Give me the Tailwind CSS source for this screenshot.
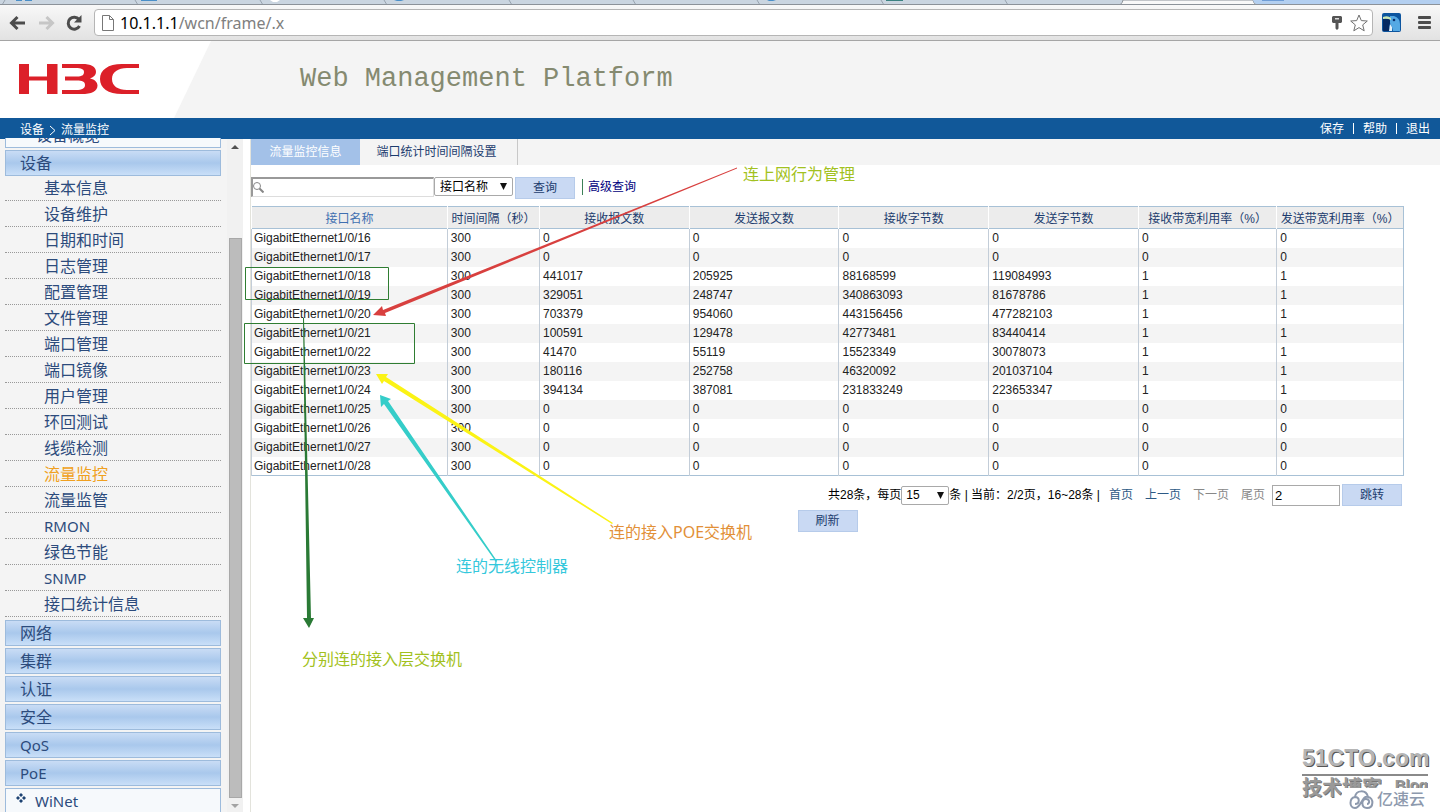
<!DOCTYPE html>
<html lang="zh-CN">
<head>
<meta charset="utf-8">
<title>Web Management Platform</title>
<script src="https://cdn.jsdelivr.net/npm/@tailwindcss/browser@4"></script>
</head>
<body class="relative flex h-screen flex-col overflow-hidden bg-white font-['Liberation_Sans','Noto_Sans_CJK_SC',sans-serif] text-xs text-[#1c3c6e]">

<!-- Browser chrome -->
<div class="relative h-[5px] shrink-0 overflow-hidden border-b border-[#8c9299] bg-[#cad5e0]">
  <svg class="absolute inset-0 h-[5px] w-full" aria-hidden="true">
    <g stroke="#98a3af" stroke-width="1"><path d="M5 0l-3 5M135 0l3 5M260 0l3 5M384 0l3 5M509 0l3 5M633 0l3 5M757 0l3 5M881 0l3 5M1005 0l3 5"/></g>
    <g fill="#4a8fc8"><rect x="16" y="0" width="6" height="1"/><rect x="25" y="0" width="7" height="1"/><rect x="141" y="0" width="16" height="1"/><path d="M394 0h10l-3 1h-4zM767 0h9l-3 1h-4z"/></g>
    <rect x="886" width="17" height="1" fill="#3c8281"/>
    <path d="M270 0h10l-3 2h-4z" fill="#fff"/>
    <path d="M1123 0q-1 5-5 5h140q-4 0-5-5z" fill="#f8f8f8" stroke="#8c9299"/>
    <path d="M1253 0q1 4 5 4h182V0z" fill="#b3cff0"/>
    <path d="M1262 0h22v1h-22z" fill="#6f9dd6"/>
  </svg>
</div>
<div class="flex h-9 shrink-0 items-center border-b border-[#a5a5a5] bg-linear-to-b from-[#f8f8f8] to-[#e2e2e2] pl-2 pr-2">
  <button class="h-5 w-7" aria-label="后退"><svg width="20" height="18" viewBox="0 0 20 18" fill="none" stroke="#4c4c4c" stroke-width="3"><path d="M17 9H4M9.500 3L3.500 9l6 6"/></svg></button>
  <button class="h-5 w-7" aria-label="前进"><svg width="20" height="18" viewBox="0 0 20 18" fill="none" stroke="#c6c6c6" stroke-width="3"><path d="M3 9h13M10.500 3l6 6-6 6"/></svg></button>
  <button class="h-5 w-[30px]" aria-label="刷新页面"><svg width="20" height="18" viewBox="0 0 20 18"><path d="M15 5.500A6 6 0 1 0 15.500 12" fill="none" stroke="#4c4c4c" stroke-width="3"/><path d="M17.500 1v7.500H10z" fill="#4c4c4c"/></svg></button>
  <div class="flex h-[27px] min-w-0 flex-1 items-center rounded-sm border border-[#b5b5b5] bg-white pl-[7px] pr-1">
    <svg width="12" height="16" viewBox="0 0 12 16" fill="#fff" stroke="#777"><path d="M.5.5h7l4 4v11H.500zM7.500.500v4h4"/></svg>
    <span class="ml-[6px] flex-1 font-['Noto_Sans',sans-serif] text-base text-[#808080]"><span class="text-black">10.1.1.1</span>/wcn/frame/.x</span>
    <svg width="10" height="14" viewBox="0 0 10 14"><path d="M1 0h8l1 1v5L9 7H6.500v5.500L5 14l-1.500-1.500V7H1L0 6V1z" fill="#555"/><path d="M3 2h4v1.500H3z" fill="#ddd"/></svg>
    <svg class="ml-2" width="18" height="18" viewBox="0 0 18 18" fill="#fff" stroke="#707070"><path d="M9 1l2.300 5.600 6 .4-4.600 3.900 1.500 5.900L9 13.600l-5.200 3.200 1.500-5.900L.700 7l6-.4z"/></svg>
  </div>
  <svg class="ml-[9px]" width="19" height="19" viewBox="0 0 19 19"><rect width="19" height="19" rx="2" fill="#0d559f"/><path d="M8 3h4q6 2 6 8v7h-7l-1-4q-3-4-2-8z" fill="#55a9e4"/><path d="M1 6h7v4l-1 4 2 4H1z" fill="#062a62"/><path d="M1 4q5-2 8 1v2q-4-2-8-1z" fill="#cde9b4"/><path d="M8 11l2 3v4H7z" fill="#e2f1fa"/><circle cx="12" cy="7" r="1.300" fill="#092e6c"/></svg>
  <button class="ml-4" aria-label="菜单"><svg width="15" height="14" viewBox="0 0 15 14" fill="#4c4c4c"><rect y="0" x="1" width="13" height="3" rx="1"/><rect y="5" x="1" width="13" height="3" rx="1"/><rect y="10" x="1" width="13" height="3" rx="1"/></svg></button>
</div>

<!-- Banner -->
<header class="relative flex h-[77px] shrink-0 items-center bg-[#f4f4f4]">
  <svg class="h-[77px] w-[300px] shrink-0" viewBox="0 0 300 77" role="img" aria-label="H3C">
    <path d="M0 0h211l-37 77H0z" fill="#fff"/>
    <g fill="#dc2029">
      <path d="M19 23h10v12.500h18V23h10.500v30H47V39.500H29V53H19z"/>
      <path d="M62 23h20c9 0 14 2.500 14 8 0 3-2 5-6 6.500 5 1 7.500 4 7.500 7 0 6-6 8.500-16 8.500H62v-4h14c6 0 9-1.500 9-5s-3-4.500-8-4.500H65v-4h12c5 0 7-1.500 7-4.500S81 27 76 27H62z"/>
      <path d="M139 23v4h-12c-9 0-15 4-15 11s6 11 15 11h12v4h-17c-14 0-22-6-22-15s8-15 22-15z"/>
    </g>
  </svg>
  <h1 class="font-['Liberation_Mono',monospace] text-[27px] text-[#858a70]">Web Management Platform</h1>
</header>

<nav class="flex h-[21px] shrink-0 items-center justify-between bg-[#115899] pl-5 pr-[10px] text-white" aria-label="位置">
  <div class="flex gap-[5px] pt-[2px]"><span>设备</span><svg class="mt-[3px]" width="7" height="11" viewBox="0 0 7 11" fill="none" stroke="#fff"><path d="M1 1l5 4.500L1 10"/></svg><span>流量监控</span></div>
  <div class="flex items-center gap-[9px]"><a href="#">保存</a><span class="h-[11px] w-px bg-white"></span><a href="#">帮助</a><span class="h-[11px] w-px bg-white"></span><a href="#">退出</a></div>
</nav>

<div class="flex min-h-0 flex-1">
  <!-- Sidebar -->
  <aside class="flex w-[251px] shrink-0 bg-[#f4f4f4]">
    <nav class="-mt-px flex w-[222px] flex-col gap-[2px] overflow-hidden pl-[5px] pr-px font-['Noto_Sans','Noto_Sans_CJK_SC',sans-serif] text-base leading-6 text-[#2c4b7c]" aria-label="主菜单">
      <a href="#" class="-mt-4 h-[26px] shrink-0 border border-[#9dbbdc] bg-[#f6f9fc] pl-[30px]">设备概览</a>
      <a href="#" class="h-[26px] shrink-0 border border-[#9dbbdc] bg-linear-to-b from-[#c9dcf5] via-[#a9c8ec] to-[#c9dff8] pl-[14px]">设备</a>
      <ul class="-mt-[3px] mb-px shrink-0 [&>li]:h-[26px] [&>li]:border-b [&>li]:border-dotted [&>li]:border-[#999] [&>li]:pl-[39px] [&>li]:leading-[26px]">
        <li><a href="#">基本信息</a></li>
        <li><a href="#">设备维护</a></li>
        <li><a href="#">日期和时间</a></li>
        <li><a href="#">日志管理</a></li>
        <li><a href="#">配置管理</a></li>
        <li><a href="#">文件管理</a></li>
        <li><a href="#">端口管理</a></li>
        <li><a href="#">端口镜像</a></li>
        <li><a href="#">用户管理</a></li>
        <li><a href="#">环回测试</a></li>
        <li><a href="#">线缆检测</a></li>
        <li class="text-[#f0a020]"><a href="#" aria-current="page">流量监控</a></li>
        <li><a href="#">流量监管</a></li>
        <li class="text-[15px]"><a href="#">RMON</a></li>
        <li><a href="#">绿色节能</a></li>
        <li class="text-[15px]"><a href="#">SNMP</a></li>
        <li><a href="#">接口统计信息</a></li>
      </ul>
      <a href="#" class="h-[26px] shrink-0 border border-[#9dbbdc] bg-linear-to-b from-[#c9dcf5] via-[#a9c8ec] to-[#c9dff8] pl-[14px]">网络</a>
      <a href="#" class="h-[26px] shrink-0 border border-[#9dbbdc] bg-linear-to-b from-[#c9dcf5] via-[#a9c8ec] to-[#c9dff8] pl-[14px]">集群</a>
      <a href="#" class="h-[26px] shrink-0 border border-[#9dbbdc] bg-linear-to-b from-[#c9dcf5] via-[#a9c8ec] to-[#c9dff8] pl-[14px]">认证</a>
      <a href="#" class="h-[26px] shrink-0 border border-[#9dbbdc] bg-linear-to-b from-[#c9dcf5] via-[#a9c8ec] to-[#c9dff8] pl-[14px]">安全</a>
      <a href="#" class="h-[26px] shrink-0 border border-[#9dbbdc] bg-linear-to-b from-[#c9dcf5] via-[#a9c8ec] to-[#c9dff8] pl-[14px] text-[15px]">QoS</a>
      <a href="#" class="h-[26px] shrink-0 border border-[#9dbbdc] bg-linear-to-b from-[#c9dcf5] via-[#a9c8ec] to-[#c9dff8] pl-[14px] text-[15px]">PoE</a>
      <a href="#" class="flex h-[26px] shrink-0 gap-[9px] border border-[#9dbbdc] bg-[#f6f9fc] pl-[10px] text-[15px]"><svg class="mt-1" width="10" height="10" viewBox="0 0 10 10" fill="#1d4372"><path d="M5 0l2 2-2 2-2-2zM2 3l2 2-2 2-2-2zM8 3l2 2-2 2-2-2zM5 6l2 2-2 2-2-2z"/></svg>WiNet</a>
    </nav>
    <div class="ml-[5px] flex w-4 flex-col items-center bg-[#f1f1f1]" aria-hidden="true">
      <svg class="mt-[6px] shrink-0" width="8" height="4"><path d="M0 4l4-4 4 4z" fill="#505050"/></svg>
      <div class="mt-[89px] w-[13px] flex-1 border border-[#a8a8a8] bg-[#bcbcbc]"></div>
      <svg class="mb-1 mt-[6px] shrink-0" width="8" height="4"><path d="M0 0h8L4 4z" fill="#a3a3a3"/></svg>
    </div>
    <div class="ml-auto w-[8px] border-r border-[#e3e3dc] bg-white"></div>
  </aside>

  <!-- Content -->
  <main class="min-w-0 flex-1">
    <div class="flex h-[26px] bg-[#f4f4f4]" role="tablist">
      <button role="tab" aria-selected="true" class="w-[109px] bg-[#a3c1e8] text-white">流量监控信息</button>
      <button role="tab" aria-selected="false" class="w-[158px] border-r border-[#c8c8c8] pr-1 text-[#1c3c6e]">端口统计时间间隔设置</button>
    </div>
    <div class="pr-9">
      <form class="mt-3 flex h-[22px] items-start">
        <label class="flex h-[20px] w-[183px] items-center border border-l-2 border-t-2 border-[#ddd] border-l-[#999] border-t-[#999]">
          <svg width="11" height="11" viewBox="0 0 11 11" fill="none" stroke="#888"><circle cx="4" cy="4" r="3.500"/><path d="M6.500 6.500l4 4" stroke-width="2"/></svg>
          <input type="text" aria-label="查询内容" class="min-w-0 flex-1 outline-none">
        </label>
        <div class="relative">
          <select aria-label="查询字段" class="h-[19px] w-[79px] appearance-none rounded-xs border border-[#a9a9a9] bg-white pl-[5px] text-black"><option>接口名称</option></select>
          <svg class="pointer-events-none absolute right-[6px] top-[6px]" width="7" height="7"><path d="M0 0h7L3.500 7z" fill="#111"/></svg>
        </div>
        <button type="button" class="ml-[2px] h-[22px] w-[60px] border border-[#b6cbea] bg-[#c9d9f3]">查询</button>
        <span class="ml-[7px] mt-[2px] h-4 w-px bg-[#3c8057]"></span>
        <a href="#" class="ml-[5px] mt-[2px] text-[#000080]">高级查询</a>
      </form>
      <table class="mt-[7px] w-full table-fixed border-collapse border border-[#a8c1d6] text-xs leading-[18px] text-[#222] [&_td]:h-[19px] [&_td]:border-l [&_td]:border-[#c3cdd8] [&_td]:p-0 [&_td]:pl-[3px] [&_td:first-child]:pl-[2px] [&_tbody_tr:nth-child(even)]:bg-[#f4f4f4]">
        <thead class="h-[22px] border-b border-[#a8c1d6] bg-[#ececec] text-xs text-[#1c3c6e] [&_th]:whitespace-nowrap [&_th]:border-l [&_th]:border-white [&_th]:p-0 [&_th]:pt-[3px] [&_th]:font-normal">
          <tr><th class="w-[17%] text-[#3f6fb0]">接口名称</th><th class="w-[8%]">时间间隔（秒）</th><th class="w-[13%]">接收报文数</th><th class="w-[13%]">发送报文数</th><th class="w-[13%]">接收字节数</th><th class="w-[13%]">发送字节数</th><th class="w-[12%]">接收带宽利用率（%）</th><th class="w-[11%]">发送带宽利用率（%）</th></tr>
        </thead>
        <tbody>
          <tr><td>GigabitEthernet1/0/16</td><td>300</td><td>0</td><td>0</td><td>0</td><td>0</td><td>0</td><td>0</td></tr>
          <tr><td>GigabitEthernet1/0/17</td><td>300</td><td>0</td><td>0</td><td>0</td><td>0</td><td>0</td><td>0</td></tr>
          <tr><td>GigabitEthernet1/0/18</td><td>300</td><td>441017</td><td>205925</td><td>88168599</td><td>119084993</td><td>1</td><td>1</td></tr>
          <tr><td>GigabitEthernet1/0/19</td><td>300</td><td>329051</td><td>248747</td><td>340863093</td><td>81678786</td><td>1</td><td>1</td></tr>
          <tr><td>GigabitEthernet1/0/20</td><td>300</td><td>703379</td><td>954060</td><td>443156456</td><td>477282103</td><td>1</td><td>1</td></tr>
          <tr><td>GigabitEthernet1/0/21</td><td>300</td><td>100591</td><td>129478</td><td>42773481</td><td>83440414</td><td>1</td><td>1</td></tr>
          <tr><td>GigabitEthernet1/0/22</td><td>300</td><td>41470</td><td>55119</td><td>15523349</td><td>30078073</td><td>1</td><td>1</td></tr>
          <tr><td>GigabitEthernet1/0/23</td><td>300</td><td>180116</td><td>252758</td><td>46320092</td><td>201037104</td><td>1</td><td>1</td></tr>
          <tr><td>GigabitEthernet1/0/24</td><td>300</td><td>394134</td><td>387081</td><td>231833249</td><td>223653347</td><td>1</td><td>1</td></tr>
          <tr><td>GigabitEthernet1/0/25</td><td>300</td><td>0</td><td>0</td><td>0</td><td>0</td><td>0</td><td>0</td></tr>
          <tr><td>GigabitEthernet1/0/26</td><td>300</td><td>0</td><td>0</td><td>0</td><td>0</td><td>0</td><td>0</td></tr>
          <tr><td>GigabitEthernet1/0/27</td><td>300</td><td>0</td><td>0</td><td>0</td><td>0</td><td>0</td><td>0</td></tr>
          <tr><td>GigabitEthernet1/0/28</td><td>300</td><td>0</td><td>0</td><td>0</td><td>0</td><td>0</td><td>0</td></tr>
        </tbody>
      </table>
      <div class="mt-2 flex h-[22px] items-center justify-end whitespace-nowrap pr-[2px] text-black">
        <span>共28条，每页</span>
        <div class="relative">
          <select aria-label="每页条数" class="block h-[19px] w-[48px] appearance-none rounded-xs border border-[#a9a9a9] bg-white pl-1"><option>15</option></select>
          <svg class="pointer-events-none absolute right-[5px] top-[6px]" width="7" height="7"><path d="M0 0h7L3.500 7z" fill="#111"/></svg>
        </div>
        <span>条 | 当前：2/2页，16~28条 |</span>
        <div class="ml-[9px] mr-[7px] flex gap-3 text-[#2d5a86]"><a href="#">首页</a><a href="#">上一页</a><span class="text-[#888]">下一页</span><span class="text-[#888]">尾页</span></div>
        <input type="text" value="2" aria-label="页码" class="h-[21px] w-[68px] border border-[#a9a9a9] pl-[2px] text-[13px] outline-none">
        <button class="ml-[2px] h-[22px] w-[60px] border border-[#b6cbea] bg-[#c9d9f3] text-[#1c3c6e]">跳转</button>
      </div>
      <div class="mt-1 flex justify-center"><button class="h-[22px] w-[60px] border border-[#b6cbea] bg-[#c9d9f3]">刷新</button></div>
    </div>
  </main>
</div>

<!-- Annotations laid over the page -->
<svg class="pointer-events-none absolute left-0 top-0" width="900" height="700" aria-hidden="true">
  <g fill="none" stroke="#2f7d32"><path d="M245.500 267.500h143v32h-143zM244.500 323.500h170v40h-170z"/></g>
  <path d="M737 167.500L383 310l-1-4-9 9 13 1-1-3L737 168.500z" fill="#d8403f"/>
  <path d="M613 523L386 377l2-3-12 0 6 10 2-3L612 524z" fill="#fbf315"/>
  <path d="M497 561L388 401l3-2-11-4 1 12 3-3L496 562z" fill="#35cdc9"/>
  <path d="M303 318l4 300h-4l6 10 5-10h-3L304 318z" fill="#2a7a35"/>
</svg>
<p class="absolute left-[743px] top-[163px] text-base text-[#a2c120]">连上网行为管理</p>
<p class="absolute left-[609px] top-[520px] font-['Noto_Sans','Noto_Sans_CJK_SC',sans-serif] text-base text-[#e29038]">连的接入POE交换机</p>
<p class="absolute left-[456px] top-[555px] text-base text-[#35c8dc]">连的无线控制器</p>
<p class="absolute left-[302px] top-[648px] text-base text-[#a2c120]">分别连的接入层交换机</p>

<!-- Watermark -->
<div class="pointer-events-none absolute bottom-0 right-3 h-[70px] w-[126px]">
  <p class="border-b-2 border-[#8a8a8a] text-[23px] font-bold leading-[32px] text-[#b5b5b5] [text-shadow:1px_1px_0_#555]">51CTO.com</p>
  <div class="flex justify-between text-[#999] [text-shadow:1px_1px_0_#777]"><p class="flex text-[20px] font-bold leading-6"><span class="h-[22px] overflow-hidden">技术</span><span class="h-[12px] overflow-hidden">博客</span></p><p class="h-[12px] overflow-hidden text-[15px] font-bold leading-[18px]">Blog</p></div>
  <div class="absolute bottom-0 right-[3px] flex items-center gap-[3px] text-[#8d99ad]">
    <svg width="25" height="20" viewBox="0 0 25 20" fill="none" stroke="#8d99ad" stroke-width="2"><path d="M6 7C7 0 17-1 19 7c6 1 6 11-1 11-6 0-6-9-1-9 4 0 4 5 1 5M19 7c-6-2-7 11-13 11S0 8 6 7c5 0 5 7 0 7"/></svg>
    <span class="text-base font-medium">亿速云</span>
  </div>
</div>
</body>
</html>
